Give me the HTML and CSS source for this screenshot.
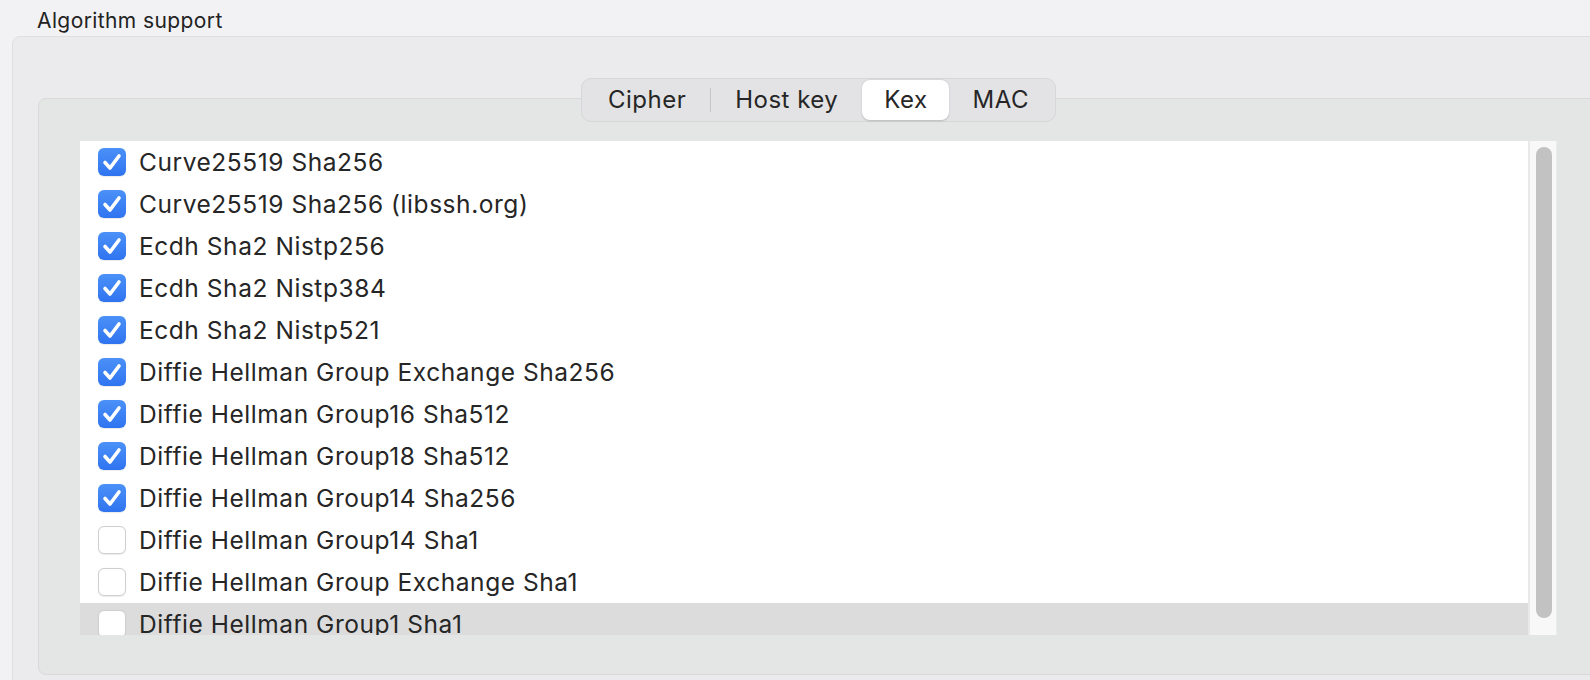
FILE: index.html
```html
<!DOCTYPE html>
<html lang="en">
<head>
  <meta charset="UTF-8" />
  <title>Algorithm support</title>
  <link rel="stylesheet" href="styles.css">
</head>
<body>
  <div class="title">Algorithm support</div>

  <section class="group">
    <div class="pane">
      <!-- segmented tabs sit on the pane's top edge -->
      <nav class="tabs">
        <span class="tab">Cipher</span>
        <span class="sep"></span>
        <span class="tab">Host key</span>
        <span class="tab active">Kex</span>
        <span class="tab">MAC</span>
      </nav>

      <div class="list">
        <ul class="rows">
          <li class="row"><span class="box on"></span>Curve25519 Sha256</li>
          <li class="row"><span class="box on"></span>Curve25519 Sha256 (libssh.org)</li>
          <li class="row"><span class="box on"></span>Ecdh Sha2 Nistp256</li>
          <li class="row"><span class="box on"></span>Ecdh Sha2 Nistp384</li>
          <li class="row"><span class="box on"></span>Ecdh Sha2 Nistp521</li>
          <li class="row"><span class="box on"></span>Diffie Hellman Group Exchange Sha256</li>
          <li class="row"><span class="box on"></span>Diffie Hellman Group16 Sha512</li>
          <li class="row"><span class="box on"></span>Diffie Hellman Group18 Sha512</li>
          <li class="row"><span class="box on"></span>Diffie Hellman Group14 Sha256</li>
          <li class="row"><span class="box"></span>Diffie Hellman Group14 Sha1</li>
          <li class="row"><span class="box"></span>Diffie Hellman Group Exchange Sha1</li>
          <li class="row hover"><span class="box"></span>Diffie Hellman Group1 Sha1</li>
        </ul>
        <div class="scroll"><div class="thumb"></div></div>
      </div>
    </div>
  </section>
</body>
</html>
```

FILE: styles.css
```css
/* --- base --- */
* { box-sizing: border-box; margin: 0; padding: 0; }
body {
  font-family: 'Inter', 'Liberation Sans', sans-serif;
  color: #262626; background: #f2f2f4;
  width: 1590px; height: 680px; overflow: hidden;
}

.title {
  font-size: 21px; line-height: 24px; letter-spacing: 0.4px;
  padding: 9px 0 0 37px; height: 36px;
  color: #222;
}

/* --- outer group box --- */
.group {
  margin-left: 12px; width: 1614px; height: 700px;
  background: #ebebed; border: 1px solid #dfdfe1; border-radius: 8px;
  padding: 61px 0 0 25px;
}

/* --- tab pane --- */
.pane {
  width: 1562px; height: 577px;
  background: #e4e5e5; border: 1px solid #d9d9da; border-radius: 8px;
  display: flex; flex-direction: column; align-items: center;
  padding: 0 42px 0 41px;
}

.tabs {
  margin-top: -21px; height: 44px;
  display: flex; align-items: center;
  padding: 0 2px;
  background: #e3e3e5; border: 1px solid #d7d7d9; border-radius: 10px;
}
.tab {
  font-size: 24px; letter-spacing: 0.5px; line-height: 40px; height: 40px;
  padding: 0 24px; border-radius: 8px;
}
.tab.active {
  background: #fff;
  padding: 0 21px 0 22px;
  box-shadow: 0 0.5px 2px rgba(0,0,0,0.18);
}
.sep { width: 1px; height: 24px; background: #c6c6c8; }

/* --- checkbox list --- */
.list {
  margin-top: 19px; width: 100%; height: 494px;
  display: flex; background: #fff; overflow: hidden;
}
.rows { flex: 1; list-style: none; }
.row {
  height: 42px; display: flex; align-items: center; gap: 13px;
  padding-left: 18px; font-size: 24.5px; letter-spacing: 0.55px;
}
.row.hover { background: #dcdcdc; }

.box {
  width: 28px; height: 28px; border-radius: 6px; flex: none;
  background: #fff; border: 1px solid #cfcfd1;
  box-shadow: 0 0.5px 1px rgba(0,0,0,0.08);
}
.box.on {
  border: none;
  background:
    url("data:image/svg+xml,%3Csvg xmlns='http://www.w3.org/2000/svg' viewBox='0 0 28 28'%3E%3Cpath d='M7 14.5l5 5.5 9-12' fill='none' stroke='white' stroke-width='3.6' stroke-linecap='round' stroke-linejoin='round'/%3E%3C/svg%3E") center / 28px 28px no-repeat,
    linear-gradient(#4b91f8, #2f74f0);
}

/* --- scrollbar --- */
.scroll {
  width: 29px; flex: none;
  background: #f8f8f8;
  border-left: 2px solid #e9e9e9; border-right: 1px solid #ececec;
  padding: 6px 4px 0 6px;
}
.thumb { height: 471px; border-radius: 8px; background: #c2c2c2; }
```
